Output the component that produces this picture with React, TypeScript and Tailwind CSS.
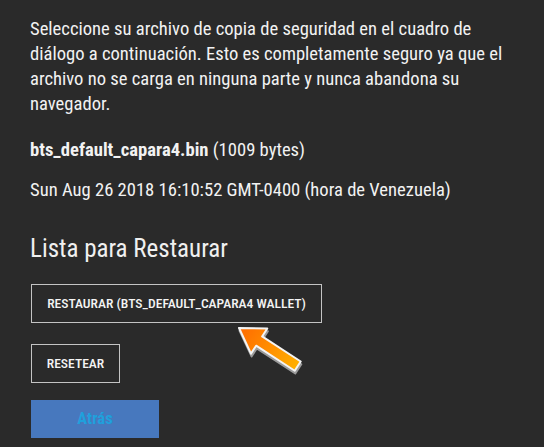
export default function App() {
  return (
    <div className="relative w-[544px] h-[447px] overflow-hidden bg-[#2a2a2a] text-[#f2f2f2] font-['Roboto_Condensed','Roboto',sans-serif]">
      <div className="pl-[30px] pt-[17px]">
        <p className="text-[18.6px] leading-[25px] whitespace-nowrap">
          Seleccione su archivo de copia de seguridad en el cuadro de
          <br />
          diálogo a continuación. Esto es completamente seguro ya que el
          <br />
          archivo no se carga en ninguna parte y nunca abandona su
          <br />
          navegador.
        </p>
        <p className="text-[18.6px] leading-[25px] mt-[21px]">
          <span className="font-bold">bts_default_capara4.bin</span> (1009 bytes)
        </p>
        <p className="text-[18.6px] leading-[25px] mt-[15px]">
          Sun Aug 26 2018 16:10:52 GMT-0400 (hora de Venezuela)
        </p>
        <h3 className="text-[25px] leading-[28px] mt-[32px] text-[#f0f0f0]">Lista para Restaurar</h3>
        <div className="flex flex-col items-start pl-[1px] mt-[21px]">
          <button className="h-[39px] w-[291px] border border-[#c4c4c4] text-[13.6px] font-medium uppercase text-[#f4f4f4] flex items-center justify-center">
            Restaurar (bts_default_capara4 wallet)
          </button>
          <button className="h-[39px] w-[89px] mt-[21px] border border-[#c4c4c4] text-[13.6px] font-medium uppercase text-[#f4f4f4] flex items-center justify-center">
            Resetear
          </button>
          <button className="h-[38px] w-[128px] mt-[17px] bg-[#4778be] text-[16.5px] font-bold text-[#1fa0dc] flex items-center justify-center">
            Atrás
          </button>
        </div>
      </div>
      <svg className="absolute left-[225px] top-[315px]" width="90" height="65" viewBox="0 0 90 65">
        <defs>
          <linearGradient id="ag" x1="0" y1="0" x2="1" y2="0">
            <stop offset="0" stopColor="#ff6a00" />
            <stop offset="1" stopColor="#ffb000" />
          </linearGradient>
        </defs>
        <g transform="translate(14 13) rotate(33)">
          <polygon
            points="0,0 24,-15 24,-5.5 70,-5.5 70,5.5 24,5.5 24,15"
            transform="translate(2 2)"
            fill="#9a9a9a"
            stroke="#9a9a9a"
            strokeWidth="2"
            strokeLinejoin="round"
          />
          <polygon
            points="0,0 24,-15 24,-5.5 70,-5.5 70,5.5 24,5.5 24,15"
            fill="url(#ag)"
            stroke="#f4f4f4"
            strokeWidth="2"
            strokeLinejoin="round"
          />
        </g>
      </svg>
    </div>
  );
}
